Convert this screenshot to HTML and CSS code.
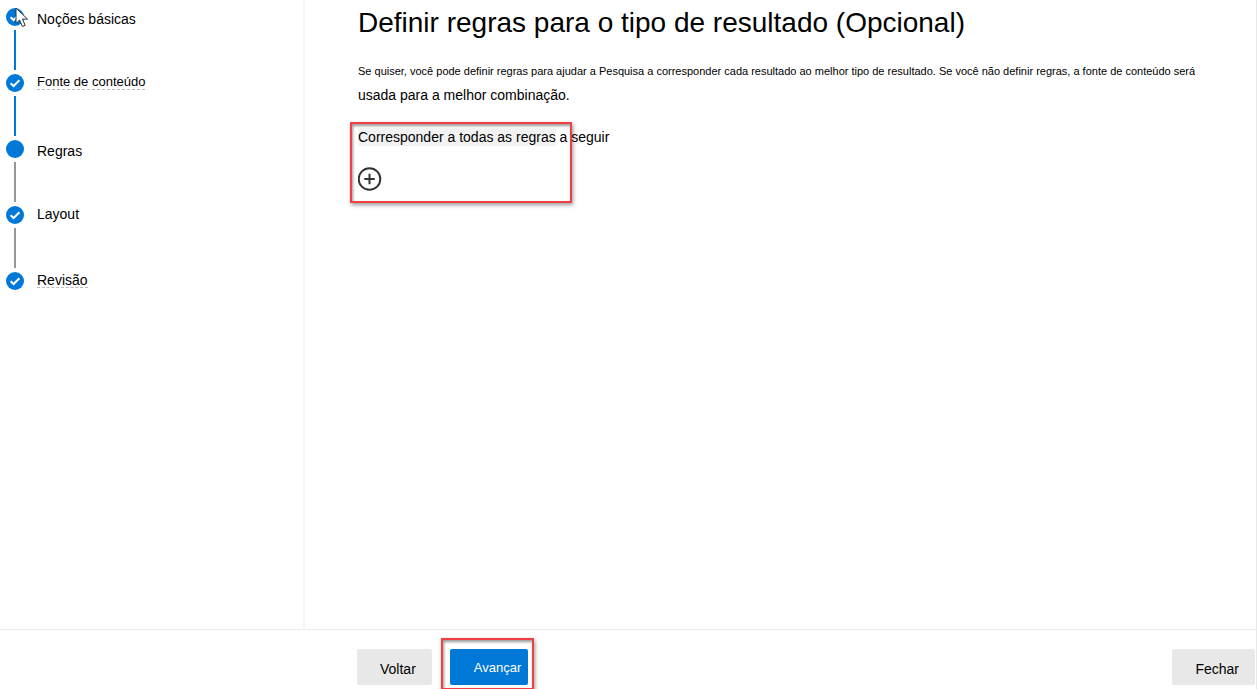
FILE: index.html
```html
<!DOCTYPE html>
<html lang="pt-BR">
<head>
<meta charset="utf-8">
<meta name="viewport" content="width=device-width, initial-scale=1">
<title>Definir regras para o tipo de resultado</title>
<link rel="stylesheet" href="styles.css">
</head>
<body>
<div class="wizard">
  <nav class="steps" aria-label="Etapas">
    <ol class="step-list">
      <li class="step step-done">
        <svg class="dot" viewBox="0 0 18 18" aria-hidden="true"><circle cx="9" cy="9" r="9"/><path d="M4.6 9.2l3 2.8L13.4 6.2"/></svg>
        <a class="step-label step-label-low" href="#basico">Noções básicas</a>
      </li>
      <li class="step step-done">
        <svg class="dot" viewBox="0 0 18 18" aria-hidden="true"><circle cx="9" cy="9" r="9"/><path d="M4.6 9.2l3 2.8L13.4 6.2"/></svg>
        <a class="step-label step-label-small step-label-dashed" href="#fonte">Fonte de conteúdo</a>
      </li>
      <li class="step">
        <svg class="dot" viewBox="0 0 18 18" aria-hidden="true"><circle cx="9" cy="9" r="9"/></svg>
        <a class="step-label step-label-low" href="#regras" aria-current="step">Regras</a>
      </li>
      <li class="step">
        <svg class="dot" viewBox="0 0 18 18" aria-hidden="true"><circle cx="9" cy="9" r="9"/><path d="M4.6 9.2l3 2.8L13.4 6.2"/></svg>
        <a class="step-label" href="#layout">Layout</a>
      </li>
      <li class="step">
        <svg class="dot" viewBox="0 0 18 18" aria-hidden="true"><circle cx="9" cy="9" r="9"/><path d="M4.6 9.2l3 2.8L13.4 6.2"/></svg>
        <a class="step-label step-label-dashed" href="#revisao">Revisão</a>
      </li>
    </ol>
    <svg class="cursor" viewBox="0 0 14 21" aria-hidden="true"><path d="M1 1v15.5l3.6-3.4 2.8 6.4 2.8-1.2-2.7-6.2h5z"/></svg>
  </nav>
  <main class="content">
    <h1 class="title">Definir regras para o tipo de resultado (Opcional)</h1>
    <p class="intro">Se quiser, você pode definir regras para ajudar a Pesquisa a corresponder cada resultado ao melhor tipo de resultado. Se você não definir regras, a fonte de conteúdo será <span class="intro-end">usada para a melhor combinação.</span></p>
    <section class="rules">
      <h2 class="rules-title">Corresponder a todas as regras a seguir</h2>
      <button class="add" type="button" aria-label="Adicionar regra">
        <svg class="add-icon" viewBox="0 0 24 24" aria-hidden="true"><circle cx="11.5" cy="12" r="10.8"/><path d="M11.5 6.8v10.4M6.3 12h10.4"/></svg>
      </button>
    </section>
  </main>
  <footer class="actions">
    <button class="button" type="button">Voltar</button>
    <span class="highlight"><button class="button button-primary" type="button">Avançar</button></span>
    <button class="button button-close" type="button">Fechar</button>
  </footer>
</div>
</body>
</html>
```
FILE: styles.css
```css
* {
  box-sizing: border-box;
}

body {
  margin: 0;
  background: #fff;
  color: #000;
  font: 14px/18px "Liberation Sans", Arial, sans-serif;
}

.wizard {
  display: grid;
  grid-template: 1fr auto / 305px 1fr;
  min-height: 100vh;
  border-right: 1px solid #e8e8e8;
  overflow: hidden;
}

.steps {
  position: relative;
  padding: 8px 6px;
  border-right: 2px solid #f6f6f6;
}

.step-list {
  margin: 0;
  padding: 0;
  list-style: none;
}

.step {
  display: grid;
  grid-template: 18px 40px / 18px 1fr;
  column-gap: 13px;
  row-gap: 4px;
  padding-bottom: 4px;
}

.step:not(:last-child)::after {
  content: "";
  justify-self: center;
  width: 2px;
  background: #979797;
}

.step.step-done::after {
  background: #0078d7;
}

.dot {
  width: 18px;
  height: 18px;
  fill: #0078d7;
}

.dot path {
  fill: none;
  stroke: #fff;
  stroke-width: 2;
}

.step-label {
  justify-self: start;
  line-height: 16px;
  color: inherit;
  text-decoration: none;
}

.step-label-low {
  padding-top: 3px;
}

.step-label-small {
  font-size: 13px;
}

.step-label-dashed {
  height: 16px;
  border-bottom: 1px dashed #bbb;
}

.cursor {
  position: absolute;
  top: 7px;
  left: 15px;
  width: 14px;
  height: 21px;
  fill: #fff;
  stroke: #2b3245;
}

.content {
  padding: 4px 30px 24px 53px;
}

.title {
  margin: 0;
  font-size: 28px;
  font-weight: 400;
  line-height: 38px;
}

.intro {
  margin: 17px 0 0;
  font-size: 11px;
  line-height: 24px;
}

.intro-end {
  font-size: 14px;
}

.rules {
  position: relative;
  z-index: 0;
  width: max-content;
  margin-top: 20px;
}

.rules::before {
  content: "";
  position: absolute;
  z-index: -1;
  inset: -6px 37px -12px -8px;
  border: 2px solid #f04044;
  box-shadow: 1px 2px 4px #999, inset 1px 2px 3px #999;
}

.rules-title {
  margin: 0;
  background: linear-gradient(#f2f2f2, #f2f2f2) no-repeat 0 0 / 198px 100%;
  font-size: 14px;
  font-weight: 400;
}

.add {
  display: block;
  margin-top: 21px;
  padding: 0;
  border: 0;
  background: none;
}

.add-icon {
  display: block;
  width: 24px;
  height: 24px;
  fill: none;
  stroke: #333;
  stroke-width: 2;
}

.actions {
  grid-column: 1 / -1;
  display: flex;
  align-items: flex-start;
  height: 60px;
  padding: 8px 1px 0 357px;
  border-top: 1px solid #ececec;
}

.button {
  height: 36px;
  margin-top: 11px;
  padding: 4px 16px 0 23px;
  border: 0;
  border-radius: 2px;
  background: #e8e8e8;
  color: #000;
  font: inherit;
}

.highlight {
  margin-left: 9px;
  padding: 0 4px 3px 7px;
  border: 2px solid #f04044;
  box-shadow: 1px 2px 4px #999, inset 1px 2px 3px #999;
}

.button-primary {
  margin-top: 9px;
  padding: 1px 7px 0 24px;
  background: #0078d7;
  color: #fff;
  font-size: 13px;
}

.button-close {
  margin-left: auto;
}
```
